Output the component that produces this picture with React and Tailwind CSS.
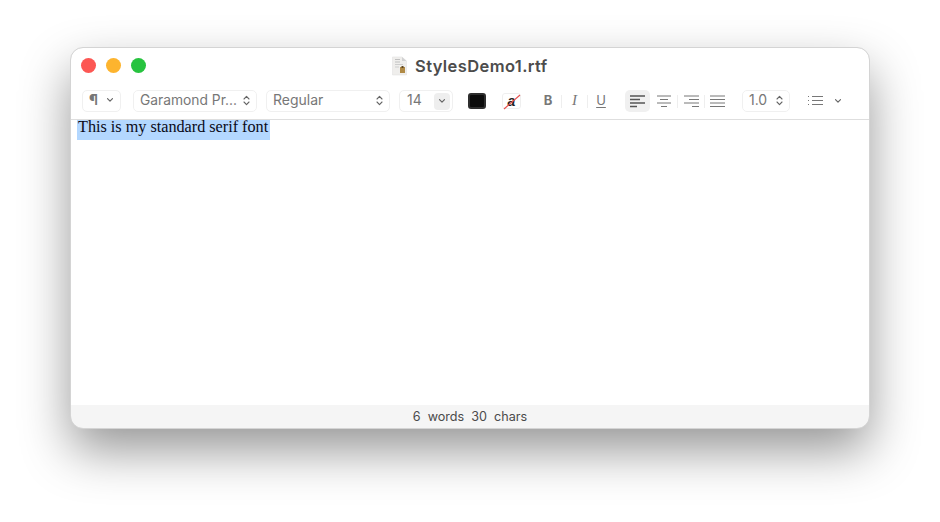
const ui = { fontFamily: 'Inter, "Liberation Sans", sans-serif' };

function UpDown() {
  return (
    <svg width="7" height="11" viewBox="0 0 7 11" fill="none" stroke="#666" strokeWidth="1.1" strokeLinecap="round" strokeLinejoin="round">
      <path d="M1 4 L3.5 1.4 L6 4" />
      <path d="M1 7 L3.5 9.6 L6 7" />
    </svg>
  );
}

function Chevron() {
  return (
    <svg width="8" height="6" viewBox="0 0 8 6" fill="none" stroke="#666" strokeWidth="1.2" strokeLinecap="round" strokeLinejoin="round">
      <path d="M1.5 1.7 L4 4.2 L6.5 1.7" />
    </svg>
  );
}

function Align({ lines }) {
  return (
    <svg width="16" height="13" viewBox="0 0 16 13" stroke="#666" strokeWidth="1">
      {lines.map((l, i) => (
        <line key={i} x1={l[0]} x2={l[1]} y1={i * 3.5 + 1} y2={i * 3.5 + 1} strokeWidth={l[2] || 1} stroke={l[3] || '#777'} />
      ))}
    </svg>
  );
}

function Box({ className, children }) {
  return (
    <div className={`h-[22px] shrink-0 flex items-center rounded-[5px] border border-[#f0f0f0] bg-white pb-[2px] text-[14px] leading-[18px] text-[#777] ${className}`}>
      {children}
    </div>
  );
}

function FileIcon() {
  return (
    <svg width="17" height="20" viewBox="0 0 17 20" className="shrink-0">
      <path d="M1.5 1 H11 L15.5 5 V19 H1.5 Z" fill="#efeeec" stroke="#e2e2e2" strokeWidth="0.6" />
      <path d="M11 1 V5 H15.5 Z" fill="#d2d2d2" />
      <rect x="4" y="3" width="5" height="1" fill="#c0c0c0" />
      <rect x="4" y="5.5" width="5" height="1" fill="#c0c0c0" />
      <rect x="4" y="8" width="8" height="1" fill="#cdcdcd" />
      <rect x="4" y="10.5" width="4" height="1" fill="#cdcdcd" />
      <rect x="9" y="11" width="5" height="6" fill="#b08a45" />
      <rect x="10.5" y="10" width="2" height="2" fill="#5d4520" />
    </svg>
  );
}

export default function App() {
  return (
    <div className="w-[940px] h-[522px] bg-white overflow-hidden pl-[71px] pt-[48px]" style={ui}>
      <div className="w-[798px] h-[380px] flex flex-col rounded-[12px] bg-white overflow-hidden outline outline-[#d4d4d4] shadow-[0_22px_50px_rgba(0,0,0,0.42)]">
        {/* title bar */}
        <div className="relative h-[36px] shrink-0 flex items-center pl-[10px] pb-[2px] gap-[10px]">
          <div className="w-[15px] h-[15px] rounded-full bg-[#fc5753]" />
          <div className="w-[15px] h-[15px] rounded-full bg-[#fdb42e]" />
          <div className="w-[15px] h-[15px] rounded-full bg-[#27c33f]" />
          <div className="absolute left-[320px] top-[6px] flex items-center gap-[7px]">
            <FileIcon />
            <span className="text-[16.5px] tracking-[0.4px] font-semibold text-[#4c4c4c]">StylesDemo1.rtf</span>
          </div>
        </div>

        {/* toolbar */}
        <div className="h-[36px] shrink-0 flex items-start pt-[6px] pl-[11px] border-b border-[#dedede]">
          <Box className="w-[39px] pl-[6px] gap-[8px] text-[#777]">
            <span className="text-[15px] font-bold">¶</span>
            <Chevron />
          </Box>
          <Box className="w-[124px] ml-[12px] pl-[6px] justify-between pr-[6px]">
            <span className="text-[13.8px]">Garamond Pr...</span>
            <UpDown />
          </Box>
          <Box className="w-[124px] ml-[9px] pl-[6px] justify-between pr-[6px]">
            <span>Regular</span>
            <UpDown />
          </Box>
          <Box className="w-[54px] ml-[9px] pl-[7px] justify-between pr-[2px] text-[#666]">
            <span>14</span>
            <span className="w-[16px] h-[17px] mt-[2px] rounded-[4px] bg-[#eeeeee] flex items-center justify-center">
              <Chevron />
            </span>
          </Box>
          <div className="w-[18px] h-[16px] ml-[15px] mt-[3px] shrink-0 rounded-[3px] bg-[#0c0c0c] border-2 border-[#2e2e2e]" />
          <div className="relative w-[19px] h-[16px] ml-[16px] mt-[3px] shrink-0 rounded-[3px] border border-[#efefef] flex items-center justify-center text-[14px] italic font-semibold text-[#222] leading-none" style={{ fontFamily: '"Liberation Sans", sans-serif' }}>
            a
            <svg width="19" height="16" viewBox="0 0 19 16" className="absolute inset-0">
              <line x1="1" y1="15" x2="17" y2="1" stroke="#e8504f" strokeWidth="1.1" />
            </svg>
          </div>
          <div className="w-[26px] ml-[14px] h-[22px] pb-[1px] flex items-center justify-center text-[13px] font-bold text-[#777]">B</div>
          <div className="w-px h-[13px] mt-[5px] bg-[#eeeeee]" />
          <div className="w-[25px] h-[22px] pb-[1px] flex items-center justify-center text-[15px] italic text-[#777]" style={{ fontFamily: '"Liberation Serif", serif' }}>I</div>
          <div className="w-px h-[13px] mt-[5px] bg-[#eeeeee]" />
          <div className="w-[26px] h-[22px] pb-[1px] flex items-center justify-center text-[13px] text-[#777] underline underline-offset-2">U</div>
          <div className="w-[25px] h-[22px] ml-[11px] rounded-[5px] bg-[#f0f0f0] flex items-center justify-center">
            <Align lines={[[0, 15, 1.3, '#555'], [0, 10, 1.3, '#555'], [0, 15, 1.3, '#555'], [0, 7, 1.3, '#555']]} />
          </div>
          <div className="w-[27px] h-[22px] flex items-center justify-center">
            <Align lines={[[1, 15], [4, 12], [1, 15], [5, 11]]} />
          </div>
          <div className="w-px h-[13px] mt-[5px] bg-[#eeeeee]" />
          <div className="w-[26px] h-[22px] flex items-center justify-center">
            <Align lines={[[1, 16], [6, 16], [1, 16], [9, 16]]} />
          </div>
          <div className="w-px h-[13px] mt-[5px] bg-[#eeeeee]" />
          <div className="w-[26px] h-[22px] flex items-center justify-center">
            <Align lines={[[0, 15], [0, 15], [0, 15], [0, 15]]} />
          </div>
          <Box className="w-[48px] ml-[11px] pl-[6px] justify-between pr-[6px] text-[#666]">
            <span>1.0</span>
            <UpDown />
          </Box>
          <svg width="15" height="11" viewBox="0 0 15 11" className="ml-[18px] mt-[5px] shrink-0" stroke="#777" strokeWidth="1">
            <line x1="0" x2="2" y1="1.5" y2="1.5" strokeDasharray="1 1" />
            <line x1="0" x2="2" y1="5.5" y2="5.5" strokeDasharray="1 1" />
            <line x1="0" x2="2" y1="9.5" y2="9.5" strokeDasharray="1 1" />
            <line x1="4" x2="15" y1="1.5" y2="1.5" />
            <line x1="4" x2="15" y1="5.5" y2="5.5" />
            <line x1="4" x2="15" y1="9.5" y2="9.5" />
          </svg>
          <div className="ml-[11px] mt-[8px] flex"><Chevron /></div>
        </div>

        {/* document */}
        <div className="flex-1 pl-[6px]">
          <div className="w-[193px] h-[20px] bg-[#b3d7ff] pl-px text-[16.2px] leading-[14px] text-[#0a0a18] whitespace-nowrap" style={{ fontFamily: '"Liberation Serif", serif' }}>
            This is my standard serif font
          </div>
        </div>

        {/* status bar */}
        <div className="h-[23px] shrink-0 bg-[#f5f5f5] pt-[1px] flex items-center justify-center text-[12.6px] text-[#4a4a4a] whitespace-pre">
          6  words  30  chars
        </div>
      </div>
    </div>
  );
}
